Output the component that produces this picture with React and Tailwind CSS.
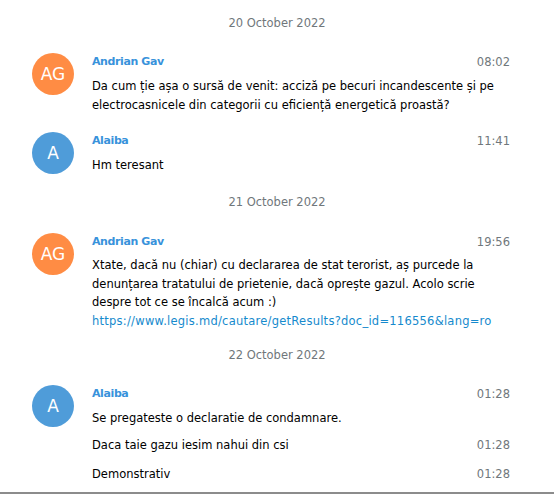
import React from 'react';

const userpics = {
    orange: 'bg-[#ff8c44]',
    blue: 'bg-[#4f9cd9]',
};

const DateRow = ({ children, className = '' }) => (
    <div className={`text-center text-[#70777b] leading-[18px] ${className}`}>{children}</div>
);

const Userpic = ({ initials, color }) => (
    <div className={`w-[42px] h-[42px] rounded-full flex items-center justify-center text-white text-[17px] leading-none shrink-0 ${userpics[color]}`}>
        {initials}
    </div>
);

const Time = ({ children }) => (
    <span className="text-[#70777b] leading-[18px]">{children}</span>
);

const Message = ({ initials, color, name, time, className = '', textClass = 'pt-[6px] leading-[19px]', children }) => (
    <div className={`flex pl-[32px] pr-[44px] ${className}`}>
        <Userpic initials={initials} color={color} />
        <div className="ml-[18px] flex-1">
            <div className="flex justify-between items-center h-[18px]">
                <span className="text-[#3892db] font-bold text-[11px] leading-[18px] tracking-[-0.4px]">{name}</span>
                <Time>{time}</Time>
            </div>
            <div className={`text-black whitespace-nowrap ${textClass}`}>{children}</div>
        </div>
    </div>
);

const Joined = ({ time, className = '', children }) => (
    <div className={`flex justify-between pl-[92px] pr-[44px] leading-[18px] ${className}`}>
        <span className="text-black">{children}</span>
        <Time>{time}</Time>
    </div>
);

export default function App() {
    return (
        <div className="w-[554px] h-[494px] bg-white flex flex-col overflow-hidden font-['DejaVu_Sans',sans-serif] text-[11.5px]">
            <DateRow className="mt-[14px]">20 October 2022</DateRow>

            <Message className="mt-[21px]" initials="AG" color="orange" name="Andrian Gav" time="08:02">
                Da cum ție așa o sursă de venit: acciză pe becuri incandescente și pe<br />
                electrocasnicele din categorii cu eficiență energetică proastă?
            </Message>

            <Message className="mt-[17px]" initials="A" color="blue" name="Alaiba" time="11:41">
                Hm teresant
            </Message>

            <DateRow className="mt-[18px]">21 October 2022</DateRow>

            <Message
                className="mt-[22px]"
                textClass="pt-[5px] leading-[18.5px]"
                initials="AG"
                color="orange"
                name="Andrian Gav"
                time="19:56"
            >
                Xtate, dacă nu (chiar) cu declararea de stat terorist, aș purcede la<br />
                denunțarea tratatului de prietenie, dacă oprește gazul. Acolo scrie<br />
                despre tot ce se încalcă acum :)<br />
                <a href="#" className="text-[#168acd] tracking-[0.25px]">https://www.legis.md/cautare/getResults?doc_id=116556&amp;lang=ro</a>
            </Message>

            <DateRow className="mt-[16px]">22 October 2022</DateRow>

            <Message className="mt-[21px]" initials="A" color="blue" name="Alaiba" time="01:28">
                Se pregateste o declaratie de condamnare.
            </Message>

            <Joined className="mt-[8px]" time="01:28">Daca taie gazu iesim nahui din csi</Joined>
            <Joined className="mt-[11px]" time="01:28">Demonstrativ</Joined>

            <div className="mt-auto h-[2px] bg-[#8c8c8c]" />
        </div>
    );
}
